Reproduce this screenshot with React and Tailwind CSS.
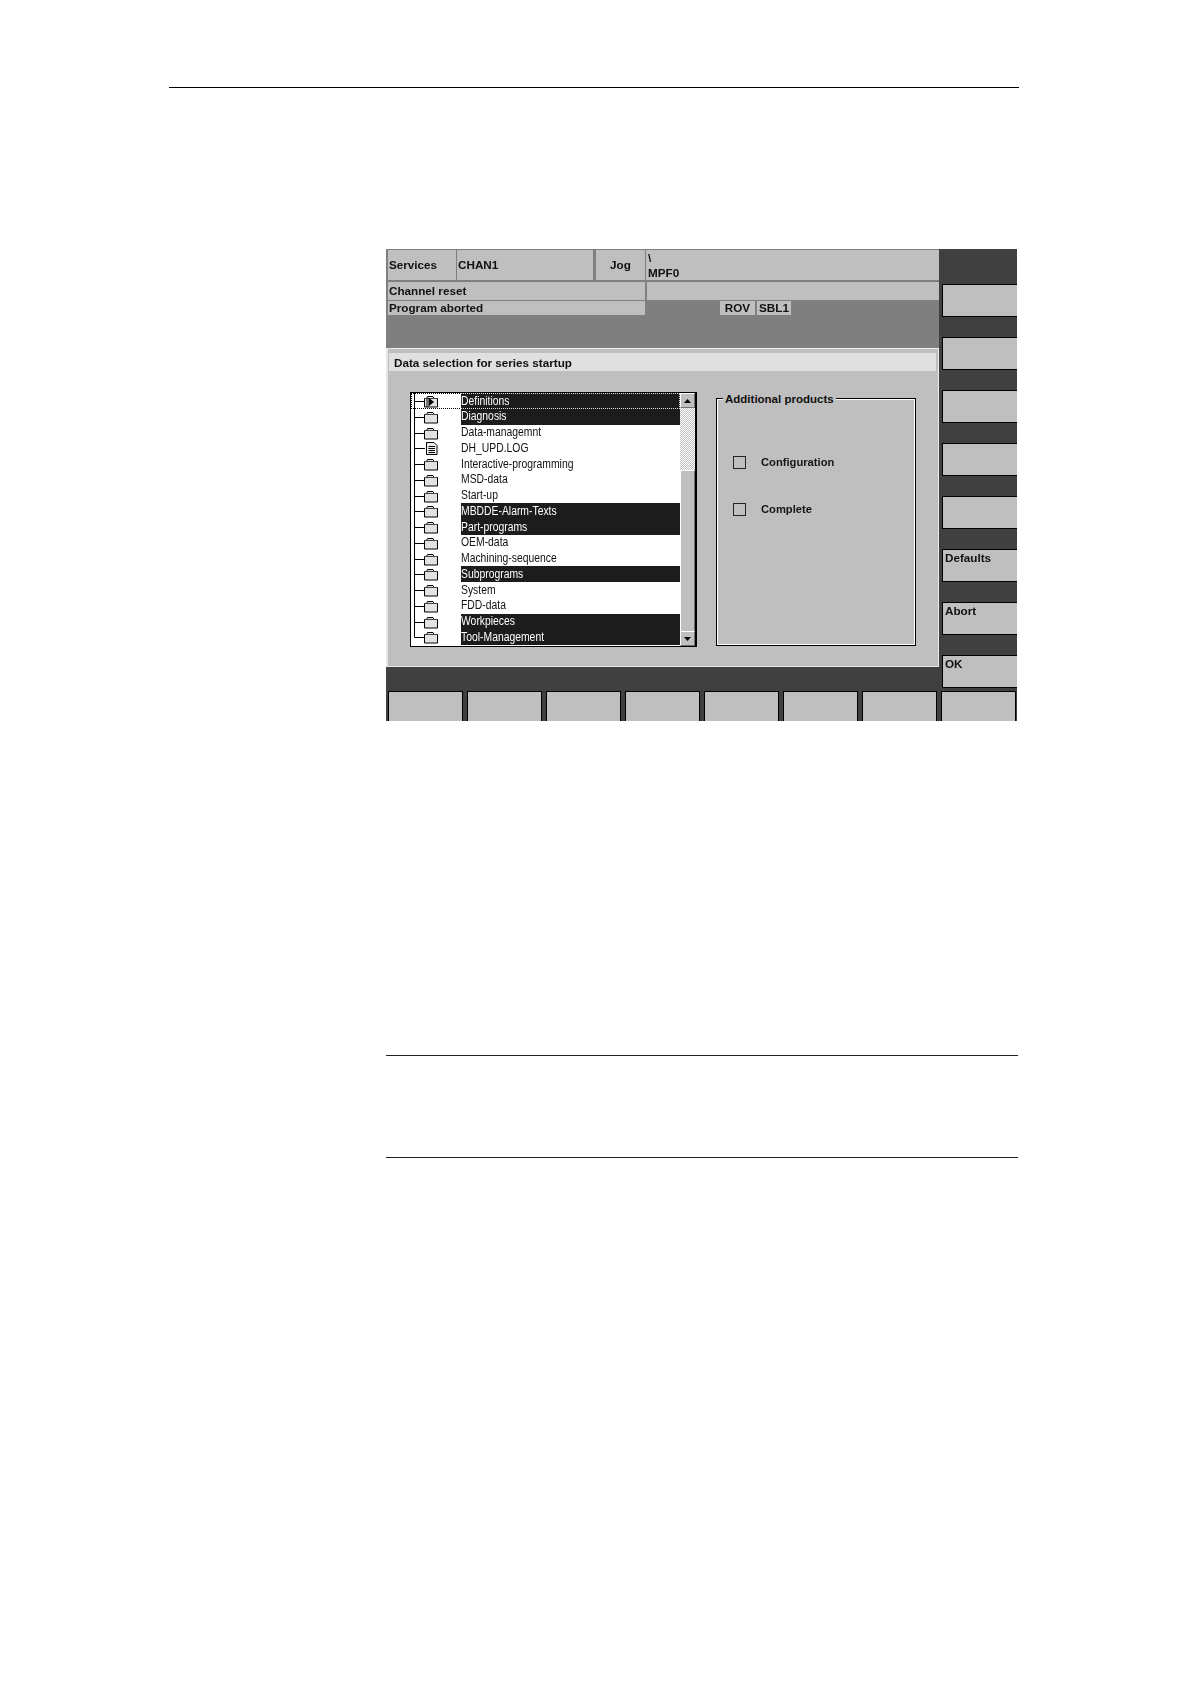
import React from 'react';

const rows = [
  { name: 'Definitions', on: true, icon: 'open' },
  { name: 'Diagnosis', on: true },
  { name: 'Data-managemnt' },
  { name: 'DH_UPD.LOG', icon: 'doc' },
  { name: 'Interactive-programming' },
  { name: 'MSD-data' },
  { name: 'Start-up' },
  { name: 'MBDDE-Alarm-Texts', on: true },
  { name: 'Part-programs', on: true },
  { name: 'OEM-data' },
  { name: 'Machining-sequence' },
  { name: 'Subprograms', on: true },
  { name: 'System' },
  { name: 'FDD-data' },
  { name: 'Workpieces', on: true },
  { name: 'Tool-Management', on: true },
];

const sideKeys = ['', '', '', '', '', 'Defaults', 'Abort', 'OK'];
const softKeys = [1, 2, 3, 4, 5, 6, 7, 8];

const TreeIcon = ({ icon, last }) => (
  <svg width="50" height="16" viewBox="-1 0 50 16" className="shrink-0 overflow-visible">
    <path d={last ? 'M2.5 -1V8.5H12' : 'M2.5 -1V17M2.5 8.5H13'} stroke="#000" fill="none" />
    {icon === 'doc' ? (
      <g stroke="#000" fill="#eee">
        <path d="M14.5 2.5H22L25 5.5V14.5H14.5Z" />
        <path d="M16.5 6.5H23M16.5 8.5H23M16.5 10.5H23M16.5 12.5H23" fill="none" />
      </g>
    ) : (
      <g>
        <path d="M12.5 14V5.5H14.5L15.5 3.5H21L22 5.5H25.5V14Z" fill="#e2e2e2" stroke="#000" />
        <path d="M13 5.5H25" stroke="#444" />
        {icon === 'open' && (
          <g>
            <path d="M15 5V14" stroke="#000" />
            <path d="M16.5 4.5L22 9L16.5 13.5Z" fill="#000" />
          </g>
        )}
      </g>
    )}
  </svg>
);

const Arrow = ({ down }) => (
  <div className="w-[15px] h-[15px] flex items-center justify-center bg-[#bfbfbf] border-t border-l border-t-white border-l-white border-r border-b border-r-[#707070] border-b-[#707070]">
    <svg width="7" height="4" viewBox="0 0 7 4">
      <path d={down ? 'M0 0H7L3.5 4Z' : 'M0 4H7L3.5 0Z'} fill="#000" />
    </svg>
  </div>
);

const Check = ({ label }) => (
  <div className="flex items-center h-[13px]">
    <div className="w-[13px] h-[13px] border border-[#222]"></div>
    <span className="ml-[15px] text-[11.2px] font-bold text-[#151515] leading-[13px]">{label}</span>
  </div>
);

export default function App() {
  return (
    <div className="w-[1190px] h-[1684px] bg-white font-['Liberation_Sans',Arial,sans-serif] overflow-hidden">
      <div className="pt-[87px] pl-[169px]">
        <div className="w-[850px] h-px bg-black"></div>
      </div>

      {/* machine screen */}
      <div className="mt-[161px] ml-[386px] w-[631px] h-[472px] bg-[#404040] overflow-hidden">
        <div className="flex h-[442px]">
          <div className="w-[553px] flex flex-col">
            {/* header block */}
            <div className="h-[99px] bg-[#7f7f7f] pl-[2px] pt-px text-[11.7px] font-bold text-[#111] leading-none">
              <div className="flex h-[30px]">
                <div className="w-[68px] bg-[#bfbfbf] pl-px flex items-center">Services</div>
                <div className="ml-px w-[136px] bg-[#bfbfbf] pl-px flex items-center">CHAN1</div>
                <div className="ml-[3px] w-[49px] bg-[#bfbfbf] pl-[14px] flex items-center">Jog</div>
                <div className="ml-px flex-1 bg-[#bfbfbf] pl-[2px] leading-[15px]">
                  <div>\</div>
                  <div>MPF0</div>
                </div>
              </div>
              <div className="flex h-[18px] mt-[2px]">
                <div className="w-[257px] bg-[#bfbfbf] pl-px flex items-center">Channel reset</div>
                <div className="ml-[2px] flex-1 bg-[#bfbfbf]"></div>
              </div>
              <div className="flex h-[14px] mt-px">
                <div className="w-[257px] bg-[#bfbfbf] pl-px flex items-center">Program aborted</div>
                <div className="ml-[75px] w-[35px] bg-[#bfbfbf] flex items-center justify-center">ROV</div>
                <div className="ml-[2px] w-[34px] bg-[#bfbfbf] flex items-center justify-center">SBL1</div>
              </div>
            </div>

            {/* dialog */}
            <div className="h-[319px] bg-[#bfbfbf] border-t border-t-[#ececec] border-l-2 border-l-[#e6e6e6] border-r border-r-[#ececec] border-b border-b-[#e6e6e6] pt-[4px]">
              <div className="ml-px mr-[2px] h-[18px] bg-[#e0e0e0] pl-[5px] pt-[2px] flex items-center text-[11.7px] font-bold text-[#111]">
                Data selection for series startup
              </div>
              <div className="flex items-start pl-[22px] mt-[21px]">
                <div className="w-[287px] h-[255px] border-t border-l border-r-2 border-b border-black bg-white flex">
                  <div className="w-[269px]">
                    {rows.map((r, i) => (
                      <div key={r.name} className="relative flex h-[15.75px]">
                        <TreeIcon icon={r.icon} last={i === rows.length - 1} />
                        <div
                          className={
                            r.on
                              ? 'flex-1 bg-[#1c1c1c] text-white flex items-center overflow-hidden'
                              : 'flex-1 text-[#111] flex items-center overflow-hidden'
                          }
                        >
                          <span className="inline-block origin-left scale-x-[0.83] text-[12.5px] leading-none whitespace-nowrap">
                            {r.name}
                          </span>
                        </div>
                        {i === 0 && (
                          <div className="absolute inset-0 border border-dotted border-white mix-blend-difference"></div>
                        )}
                      </div>
                    ))}
                  </div>
                  <div className="w-[15px] flex flex-col">
                    <Arrow />
                    <div className="h-[62px] bg-[repeating-conic-gradient(#bfbfbf_0%_25%,#fff_0%_50%)] bg-size-[2px_2px]"></div>
                    <div className="flex-1 bg-[#bfbfbf] border-t border-l border-t-white border-l-white border-r border-r-[#707070]"></div>
                    <Arrow down />
                  </div>
                </div>

                <div className="relative ml-[19px] mt-[6px] w-[200px] h-[248px] border border-black shadow-[inset_0_0_0_1px_#fff] pl-[16px] pt-[57px]">
                  <div className="absolute left-[6px] top-[-8px] bg-[#bfbfbf] px-[2px] text-[11.5px] font-bold text-[#111] leading-[16px] whitespace-nowrap">
                    Additional products
                  </div>
                  <div className="flex flex-col gap-[34px]">
                    <Check label="Configuration" />
                    <Check label="Complete" />
                  </div>
                </div>
              </div>
            </div>
          </div>

          {/* vertical softkeys */}
          <div className="flex-1 pt-[35px] pl-[3px] flex flex-col gap-[20px]">
            {sideKeys.map((label, i) => (
              <div
                key={i}
                className="h-[33px] shrink-0 bg-[#bfbfbf] border border-r-0 border-black pl-[2px] pt-px text-[11.7px] font-bold text-[#111] leading-[14px]"
              >
                {label}
              </div>
            ))}
          </div>
        </div>

        {/* horizontal softkeys */}
        <div className="flex gap-[4px] pl-[2px] h-[30px]">
          {softKeys.map((k) => (
            <div key={k} className="w-[75px] h-[34px] bg-[#bfbfbf] border border-black"></div>
          ))}
        </div>
      </div>

      {/* note rules */}
      <div className="ml-[386px] w-[632px] mt-[334px] h-px bg-[#222]"></div>
      <div className="ml-[386px] w-[632px] mt-[101px] h-px bg-[#222]"></div>
    </div>
  );
}
